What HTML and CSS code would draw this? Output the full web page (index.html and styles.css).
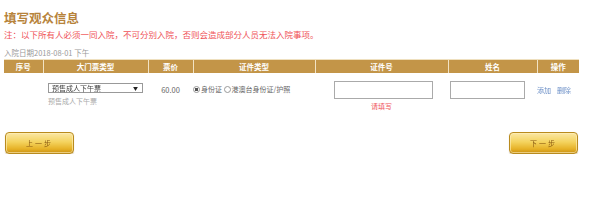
FILE: index.html
```html
<!DOCTYPE html>
<html lang="zh-CN">
<head>
    <meta charset="UTF-8">
    <title>填写观众信息</title>
    <link rel="stylesheet" href="styles.css">
</head>
<body>
    <div class="page">
        <h1 class="title">填写观众信息</h1>
        <p class="note">注：以下所有人必须一同入院，不可分别入院，否则会造成部分人员无法入院事项。</p>
        <p class="date">入院日期2018-08-01 下午</p>

        <table class="visitors">
            <colgroup>
                <col style="width:39px">
                <col style="width:105px">
                <col style="width:45px">
                <col style="width:122px">
                <col style="width:133px">
                <col style="width:89px">
                <col style="width:42px">
            </colgroup>
            <thead>
                <tr>
                    <th>序号</th>
                    <th>大门票类型</th>
                    <th>票价</th>
                    <th>证件类型</th>
                    <th>证件号</th>
                    <th>姓名</th>
                    <th>操作</th>
                </tr>
            </thead>
            <tbody>
                <tr>
                    <td></td>
                    <td class="ticket">
                        <div class="select">预售成人下午票<span class="arrow">▼</span></div>
                        <div class="hint">预售成人下午票</div>
                    </td>
                    <td class="price">60.00</td>
                    <td class="idtype">
                        <span class="radio checked"></span>身份证
                        <span class="radio"></span>港澳台身份证/护照
                    </td>
                    <td class="center">
                        <input class="field idno" type="text">
                        <div class="error">请填写</div>
                    </td>
                    <td><input class="field name" type="text" autofocus></td>
                    <td class="ops"><a href="#">添加</a><a href="#">删除</a></td>
                </tr>
            </tbody>
        </table>

        <div class="steps">
            <button class="step-btn" type="button">上一步</button>
            <button class="step-btn" type="button">下一步</button>
        </div>
    </div>
</body>
</html>
```

FILE: styles.css
```css
body {
    margin: 0;
    font-family: "Noto Sans CJK SC", "DejaVu Sans", sans-serif;
    background: #fff;
    color: #555;
}
.page {
    padding: 9px 4px 0 4px;
}
.title {
    margin: 0;
    font-size: 12.5px;
    line-height: 17px;
    font-weight: bold;
    color: #b7833b;
}
.note {
    margin: 2px 0 0 0;
    font-size: 8.5px;
    line-height: 12px;
    color: #ef5358;
}
.date {
    margin: 8px 0 0 0;
    font-size: 7.5px;
    line-height: 10px;
    color: #999;
}
.visitors {
    margin-top: 1px;
    width: 575px;
    border-collapse: collapse;
    table-layout: fixed;
}
.visitors th {
    background: #c39548;
    color: #fff;
    font-size: 7.5px;
    font-weight: bold;
    height: 13px;
    padding: 0;
    border-left: 1px solid #f2e3c4;
    border-top: 1px solid #efe0bf;
}
.visitors th:first-child {
    border-left: none;
}
.visitors td {
    vertical-align: top;
    padding: 8px 0 0 0;
    font-size: 7.5px;
    color: #666;
}
.ticket {
    padding-left: 5px !important;
}
.select {
    position: relative;
    width: 90px;
    height: 8px;
    line-height: 8px;
    border: 1px solid #999;
    margin-top: 2px;
    padding-left: 3px;
    font-size: 7px;
    color: #444;
    box-sizing: content-box;
}
.select .arrow {
    position: absolute;
    right: 4px;
    top: 0;
    font-size: 5px;
    color: #222;
}
.hint {
    margin-top: 3px;
    font-size: 7px;
    color: #aaa;
}
.price {
    text-align: center;
    padding-top: 11px !important;
    color: #666 !important;
}
.idtype {
    padding-top: 11px !important;
    white-space: nowrap;
    font-size: 7px !important;
}
.radio {
    display: inline-block;
    width: 5px;
    height: 5px;
    border: 1px solid #999;
    border-radius: 50%;
    vertical-align: -1px;
    margin-right: 1px;
}
.radio.checked {
    background: radial-gradient(circle, #555 45%, #fff 55%);
}
.center {
    text-align: center;
}
.field {
    height: 18px;
    border: 1px solid #aaa;
    box-sizing: border-box;
    margin: 0;
    padding: 0 3px;
    outline: none;
    font-size: 8px;
}
.idno {
    width: 99px;
    margin-left: 4px;
}
.name {
    width: 75px;
    margin-left: 2px;
}
.error {
    margin-top: 2px;
    font-size: 7px;
    color: #ef5358;
}
.ops {
    padding-top: 11px !important;
    white-space: nowrap;
}
.ops a {
    color: #6b8fc7;
    text-decoration: none;
    margin-right: 6px;
    font-size: 7px;
}
.steps {
    display: flex;
    justify-content: space-between;
    width: 573px;
    margin: 21px 0 0 1px;
}
.step-btn {
    width: 69px;
    height: 22px;
    border: 1px solid #b98b1e;
    border-radius: 4px;
    background: linear-gradient(#fbe7a4, #f4d35e 45%, #e6b126 80%, #c89217);
    box-shadow: inset 0 0 0 1px rgba(255, 240, 190, 0.6), 0 1px 1px rgba(120, 80, 0, 0.3);
    color: #8a5a12;
    font-family: "Noto Sans CJK SC", sans-serif;
    font-size: 7px;
    letter-spacing: 2px;
    padding: 0;
}
```
